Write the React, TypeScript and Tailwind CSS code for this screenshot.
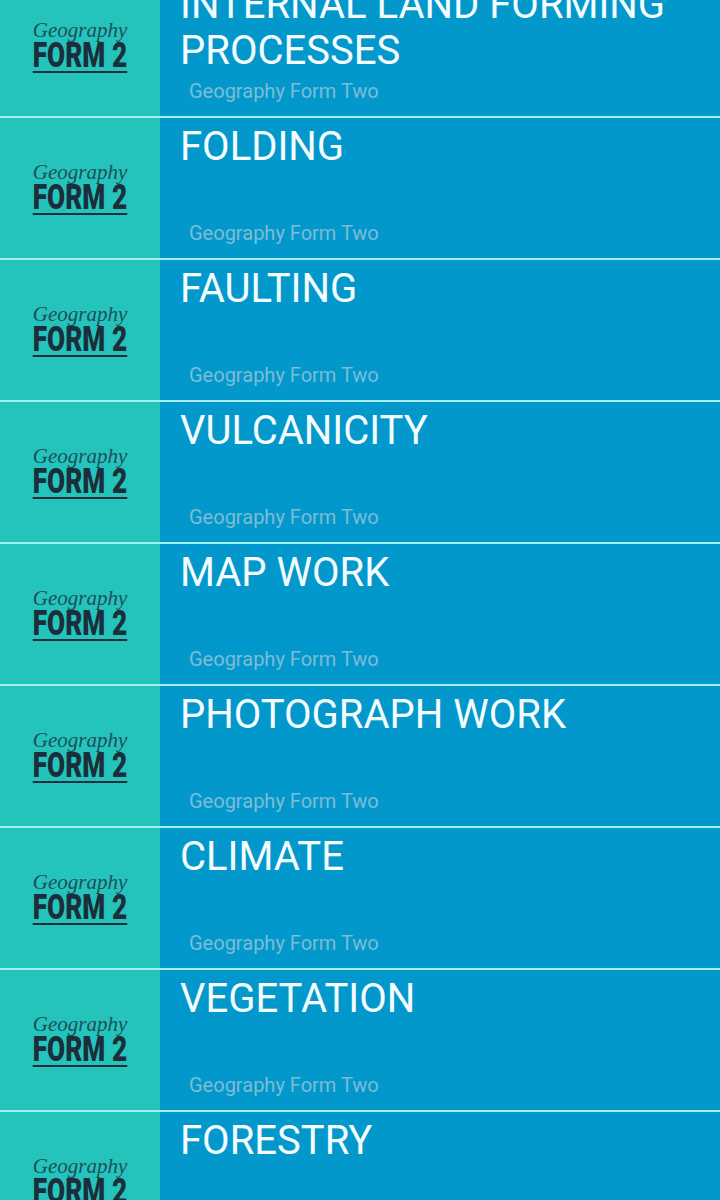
const topics = [
  "INTERNAL LAND FORMING PROCESSES",
  "FOLDING",
  "FAULTING",
  "VULCANICITY",
  "MAP WORK",
  "PHOTOGRAPH WORK",
  "CLIMATE",
  "VEGETATION",
  "FORESTRY",
];

function BookCover() {
  return (
    <div className="flex flex-col items-center">
      <span className="block h-[20px] text-[21px] leading-[20px] italic text-[#1d4f5a] font-['Liberation_Serif',serif]">
        Geography
      </span>
      <span className="mt-[3px] block scale-x-75 border-b-2 border-[#1b2e3a] pb-[2px] text-[35px] leading-[26px] font-black text-[#1b2e3a] font-['Roboto',sans-serif]">
        FORM 2
      </span>
    </div>
  );
}

function TopicRow({ title }: { title: string }) {
  return (
    <div className="flex h-[142px] border-b-2 border-[#a9ecf3]">
      <div className="flex w-[160px] shrink-0 items-center justify-center bg-[#24c4bc]">
        <BookCover />
      </div>
      <div className="flex flex-1 flex-col justify-between bg-[#0398cc] pt-[6px] pb-[13px] pl-[20px] pr-4">
        <h2 className="text-[40px] leading-[46px] text-[#f4fcff] font-['Roboto',sans-serif]">
          {title}
        </h2>
        <p className="ml-[9px] text-[20px] leading-[24px] text-[#7dbcd5] font-['Roboto',sans-serif]">
          Geography Form Two
        </p>
      </div>
    </div>
  );
}

export default function App() {
  return (
    <div className="h-[1200px] overflow-hidden bg-[#0398cc]">
      <div className="-mt-[24px]">
        {topics.map((t) => (
          <TopicRow key={t} title={t} />
        ))}
      </div>
    </div>
  );
}
